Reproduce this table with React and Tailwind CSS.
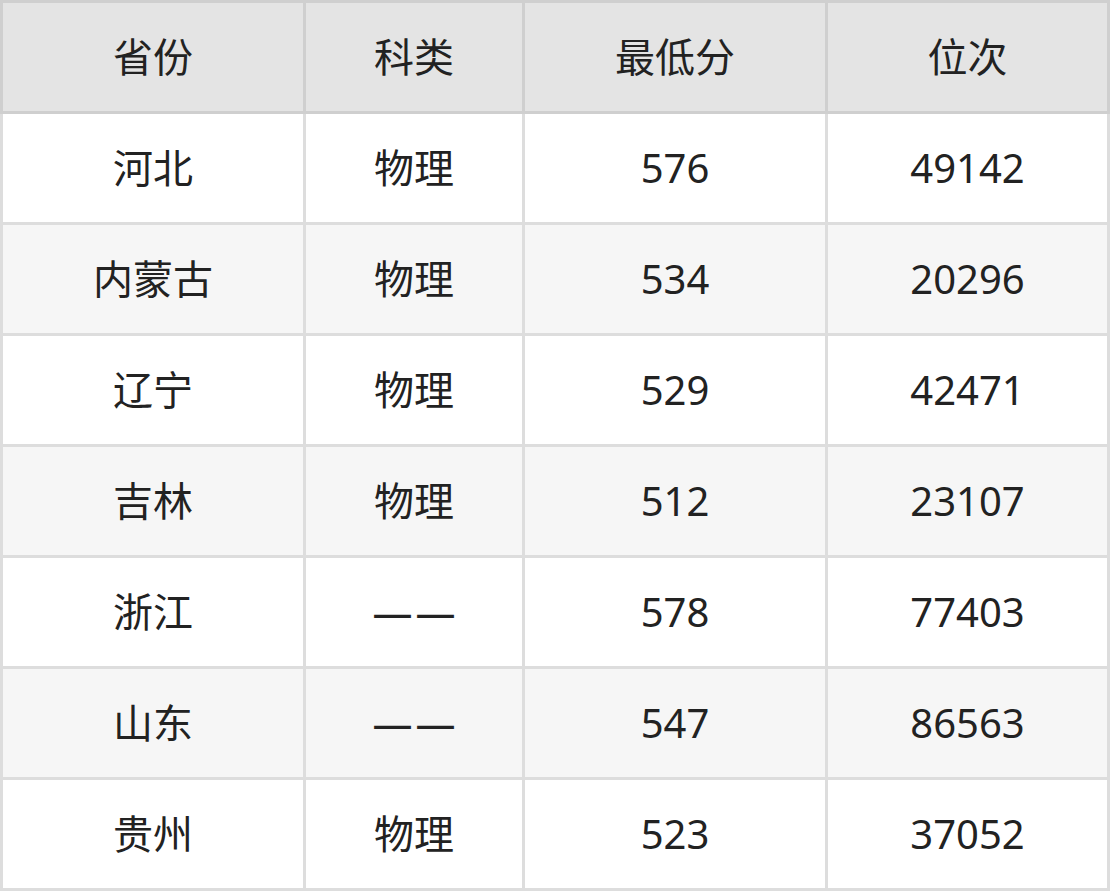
const rows = [
  ['河北', '物理', '576', '49142'],
  ['内蒙古', '物理', '534', '20296'],
  ['辽宁', '物理', '529', '42471'],
  ['吉林', '物理', '512', '23107'],
  ['浙江', '——', '578', '77403'],
  ['山东', '——', '547', '86563'],
  ['贵州', '物理', '523', '37052'],
];

const widths = ['w-[306px] border-l-[3px]', 'w-[219px]', 'w-[303px]', 'w-[282px]'];

function Cell({ text }) {
  // the two dashes sit apart a little in the source
  if (text === '——') {
    return (
      <span className="flex gap-[3px]">
        <span>—</span>
        <span>—</span>
      </span>
    );
  }
  return text;
}

export default function App() {
  return (
    <div
      className="w-[1110px] text-[40px] text-[#222222] leading-none"
      style={{ fontFamily: '"Noto Sans", "Noto Sans CJK SC", sans-serif' }}
    >
      {/* header */}
      <div className="flex h-[114px] bg-[#e4e4e4]">
        {['省份', '科类', '最低分', '位次'].map((h, i) => (
          <div
            key={h}
            className={`${widths[i]} flex items-center justify-center border-t-[3px] border-r-[3px] border-b-[3px] border-[#cfcfcf]`}
          >
            {h}
          </div>
        ))}
      </div>

      {rows.map((r, ri) => (
        <div key={r[0]} className={`flex h-[111px] ${ri % 2 === 1 ? 'bg-[#f6f6f6]' : 'bg-white'}`}>
          {r.map((c, i) => (
            <div
              key={i}
              className={`${widths[i]} flex items-center justify-center border-r-[3px] border-b-[3px] border-[#dddddd]`}
            >
              <Cell text={c} />
            </div>
          ))}
        </div>
      ))}
    </div>
  );
}
